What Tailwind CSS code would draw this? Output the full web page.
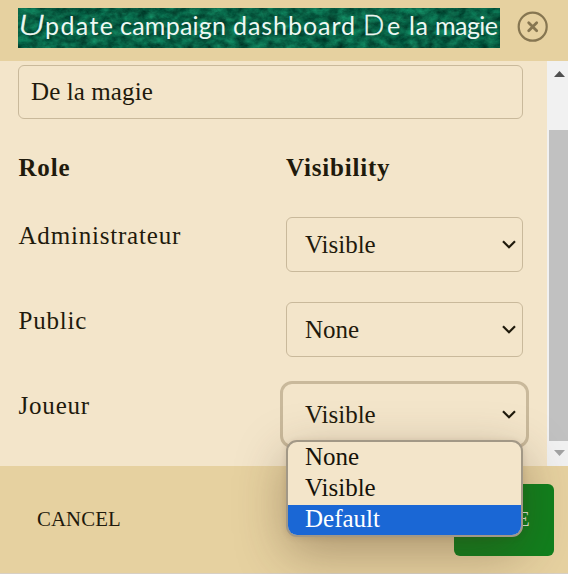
<!DOCTYPE html>
<html lang="en">
<head>
<meta charset="utf-8">
<title>Update campaign dashboard</title>
<script src="https://cdn.jsdelivr.net/npm/@tailwindcss/browser@4"></script>
</head>
<body class="w-[568px] h-[574px] overflow-hidden bg-[#d8d0c4] font-['Liberation_Serif',serif] text-[25px] text-[#1f1a0c]">
<div class="relative flex h-[573px] flex-col bg-[#f3e5ca]">
  <header class="flex h-[61px] shrink-0 items-start bg-[#e6d1a0] pl-[18px] pt-2">
    <h1 class="relative h-10 w-[482px] overflow-hidden bg-[#07553d]">
      <svg class="absolute inset-0" width="482" height="40" aria-hidden="true">
        <filter id="grass" x="0" y="0" width="100%" height="100%" color-interpolation-filters="sRGB">
          <feTurbulence type="fractalNoise" baseFrequency="0.1 0.14" numOctaves="5" seed="8"/>
          <feColorMatrix values="0.12 0 0 0 -0.03  0.42 0.2 0 0 0.07  0.3 0.14 0 0 0.05  0 0 0 0 1"/>
        </filter>
        <rect width="482" height="40" filter="url(#grass)"/>
      </svg>
      <svg class="absolute inset-0 font-['Papyrus','Lato',sans-serif] text-[25px] font-normal" width="482" height="40" fill="#eef8f3">
        <text x="0" y="27" textLength="27" lengthAdjust="spacingAndGlyphs" font-size="28" font-style="italic" font-weight="300" stroke="#eef8f3" stroke-width="0.4">U</text>
        <text y="27"><tspan x="27" textLength="68">pdate</tspan> <tspan x="102" textLength="106">campaign</tspan> <tspan x="215" textLength="122">dashboard</tspan> <tspan x="345" font-size="28" font-weight="300" stroke="#eef8f3" stroke-width="0.4">D</tspan><tspan x="369">e</tspan> <tspan x="391" textLength="19">la</tspan> <tspan x="417" textLength="63">magie</tspan></text>
      </svg>
    </h1>
    <button class="ml-[17px] mt-[3px]" aria-label="Close">
      <svg class="block" width="32" height="32" viewBox="0 0 32 32" fill="none" stroke="#867651"><circle cx="15.7" cy="15.7" r="14" stroke-width="2.2"/><path d="M11.7 11.7l8 8M19.7 11.7l-8 8" stroke-width="2.8" stroke-linecap="round"/></svg>
    </button>
  </header>

  <div class="flex h-[405px] shrink-0">
    <main class="w-[547px] pl-[18px] pt-1">
      <div class="flex h-[54px] w-[505px] items-center rounded-md border border-[#c9b99b] pl-3 leading-[54px] tracking-[0.1px]">De la magie</div>
      <div class="mt-[31px] grid h-[67px] grid-cols-[268px_237px] font-bold leading-9 tracking-[0.8px]"><span class="pl-[0.5px]">Role</span><span>Visibility</span></div>
      <div class="grid h-[85px] grid-cols-[268px_237px] items-start">
        <span class="pl-[0.5px] leading-[38px] tracking-[0.8px]">Administrateur</span>
        <div class="flex h-[55px] items-center justify-between rounded-md border border-[#c9b99b] pl-[18px] pr-1.5">Visible<svg width="14" height="10" viewBox="0 0 14 10" fill="none" stroke="#1f1a0c" stroke-width="2.2"><path d="M1 1.2l6 6 6-6"/></svg></div>
      </div>
      <div class="grid h-[85px] grid-cols-[268px_237px] items-start">
        <span class="pl-[0.5px] leading-[38px] tracking-[0.8px]">Public</span>
        <div class="flex h-[55px] items-center justify-between rounded-md border border-[#c9b99b] pl-[18px] pr-1.5">None<svg width="14" height="10" viewBox="0 0 14 10" fill="none" stroke="#1f1a0c" stroke-width="2.2"><path d="M1 1.2l6 6 6-6"/></svg></div>
      </div>
      <div class="grid h-[79px] grid-cols-[268px_237px] items-start">
        <span class="pl-[0.5px] leading-[38px] tracking-[0.8px]">Joueur</span>
        <div class="-mx-[6px] -mt-[6px] flex h-[67px] items-center justify-between rounded-xl border-3 border-[#c9b99b] pl-[22px] pr-[10px]">Visible<svg width="14" height="10" viewBox="0 0 14 10" fill="none" stroke="#1f1a0c" stroke-width="2.2"><path d="M1 1.2l6 6 6-6"/></svg></div>
      </div>
    </main>
    <div class="flex w-[21px] flex-col bg-[#f1f1f1] pl-0.5">
      <svg class="h-[69px] w-[19px] shrink-0" viewBox="0 0 19 69"><path d="M5 16l5.5-6 5.5 6z" fill="#505050"/></svg>
      <div class="h-[311px] shrink-0 bg-[#c1c1c1]"></div>
      <svg class="h-[25px] w-[19px] shrink-0" viewBox="0 0 19 25"><path d="M5 9h11l-5.5 6z" fill="#a3a3a3"/></svg>
    </div>
  </div>

  <footer class="flex h-[107px] items-start justify-between bg-[#e6d1a0] pl-[37px] pr-[14px] pt-[18px] text-[20.8px]">
    <button class="h-[72px] pb-0.5 tracking-[0.1px]">CANCEL</button>
    <button class="h-[72px] w-[100px] rounded-md bg-[#10801d] pb-0.5 text-[#e4f0df]">SAVE</button>
  </footer>

  <ul class="absolute left-[286px] top-[440px] h-[97px] w-[237px] overflow-hidden rounded-[11px] border-2 border-[#a29886] bg-[#f3e5ca] leading-[29px] text-[#151209] shadow-[0_16px_50px_rgba(70,45,25,0.36),0_1px_6px_rgba(70,45,25,0.12)]">
    <li class="h-[31px] pl-[17px]">None</li>
    <li class="h-8 pl-[17px]">Visible</li>
    <li class="h-[31px] bg-[#1a67d5] pl-[17px] leading-[27px] text-white">Default</li>
  </ul>
</div>
</body>
</html>
